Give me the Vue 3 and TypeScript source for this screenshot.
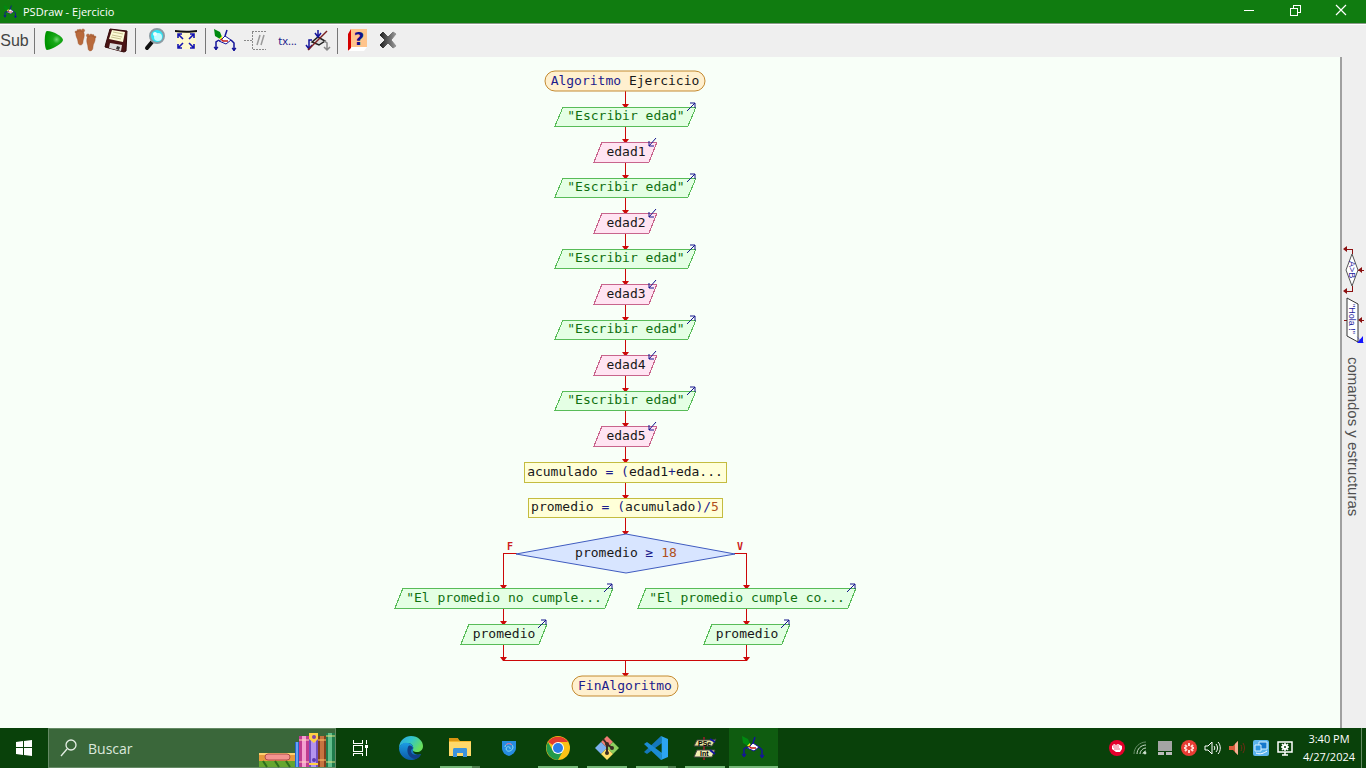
<script setup lang="ts">
type Kind = 'terminal' | 'output' | 'input' | 'assign' | 'decision'
type Tone = 'word' | 'key' | 'string' | 'number'

interface Piece {
  text: string
  tone: Tone
}

interface FlowNode {
  kind: Kind
  x: number
  y: number
  w: number
  h: number
  pieces: Piece[]
}

interface Arrow {
  x: number
  from: number
  to: number
}

const NODE_H = 20
const AXIS = 625
const LEFT_AXIS = 503
const RIGHT_AXIS = 746

const piece = (text: string, tone: Tone = 'word'): Piece => ({ text, tone })

const node = (kind: Kind, x: number, y: number, w: number, pieces: Piece[], h = NODE_H): FlowNode =>
  ({ kind, x, y, w, h, pieces })

const readingRows = [107, 178, 249, 320, 391]
const readings: FlowNode[] = readingRows.flatMap((y, i) => [
  node('output', 555, y, 141, [piece('"Escribir edad"', 'string')], 19),
  node('input', 594, y + 35, 63, [piece(`edad${i + 1}`)]),
])

const mainColumn: FlowNode[] = [
  node('terminal', 545, 71, 160, [piece('Algoritmo', 'key'), piece(' Ejercicio')]),
  ...readings,
  node('assign', 524, 462, 202, [piece('acumulado '), piece('= (', 'key'), piece('edad1'), piece('+', 'key'), piece('eda...')]),
  node('assign', 528, 498, 194, [
    piece('promedio '), piece('= (', 'key'), piece('acumulado'), piece(')/', 'key'), piece('5', 'number'),
  ], 19),
  node('decision', 516, 534, 219, [piece('promedio '), piece('≥ ', 'key'), piece('18', 'number')], 39),
]

const branches: FlowNode[] = [
  node('output', 395, 588, 218, [piece('"El promedio no cumple...', 'string')]),
  node('output', 461, 624, 86, [piece('promedio')]),
  node('output', 638, 588, 218, [piece('"El promedio cumple co...', 'string')]),
  node('output', 704, 624, 86, [piece('promedio')]),
]

const nodes: FlowNode[] = [
  ...mainColumn,
  ...branches,
  node('terminal', 572, 676, 106, [piece('FinAlgoritmo', 'key')]),
]

const arrows: Arrow[] = [
  ...mainColumn.slice(1).map((n, i) => ({ x: AXIS, from: mainColumn[i].y + NODE_H, to: n.y })),
  { x: LEFT_AXIS, from: 553, to: 588 },
  { x: LEFT_AXIS, from: 608, to: 624 },
  { x: LEFT_AXIS, from: 644, to: 660 },
  { x: RIGHT_AXIS, from: 553, to: 588 },
  { x: RIGHT_AXIS, from: 608, to: 624 },
  { x: RIGHT_AXIS, from: 644, to: 660 },
  { x: AXIS, from: 660, to: 676 },
]

function outline(n: FlowNode): string {
  const r = n.x + n.w
  const b = n.y + n.h
  if (n.kind === 'decision') {
    const cx = n.x + Math.round(n.w / 2)
    const cy = n.y + Math.round(n.h / 2)
    return `M${n.x} ${cy}L${cx} ${n.y}L${r} ${cy}L${cx} ${b}Z`
  }
  if (n.kind === 'output' || n.kind === 'input') {
    return `M${n.x + 8} ${n.y}H${r}L${r - 8} ${b}H${n.x}Z`
  }
  return `M${n.x} ${n.y}H${r}V${b}H${n.x}Z`
}

function mark(n: FlowNode): string {
  const r = n.x + n.w
  return n.kind === 'output'
    ? `M${r - 9} ${n.y + 4}L${r - 1} ${n.y - 4}M${r - 6} ${n.y - 4}H${r - 1}V${n.y + 1}`
    : `M${r - 1} ${n.y - 4}L${r - 8} ${n.y + 4}M${r - 8} ${n.y - 1}V${n.y + 4}H${r - 3}`
}

const baseline = (n: FlowNode): number => {
  if (n.kind === 'decision') return n.y + 23
  return n.h < NODE_H ? n.y + 13 : n.y + 14
}
const head = (a: Arrow): string => `M${a.x - 3} ${a.to - 3}H${a.x + 4}L${a.x + 1} ${a.to + 1}H${a.x}Z`
</script>

<template>
  <div class="window">
    <svg class="defs" aria-hidden="true">
      <symbol id="psdraw" viewBox="0 0 25 24">
        <path d="M1 0L7 3L9 8L7 10L2 7Z" fill="#008a10" />
        <path d="M6 10L9 7L10 11Z" fill="#ffff20" />
        <path d="M12 7L18 11L13 15L6 12L9 10Z" fill="#fff" stroke="#14149a" stroke-width="1" />
        <path d="M8 10L10 12H12L15 12" fill="none" stroke="#c01818" stroke-width="1.5" />
        <path d="M14 1L12 7M6 11L3 13V20M18 11L21 14V21" fill="none" stroke="#14149a" stroke-width="1.5" />
        <path d="M1 18L3 21L5 18L3 19ZM19 19L21 22L23 19L21 20Z" fill="#14149a" stroke="#14149a" />
      </symbol>
    </svg>

    <header class="titlebar">
      <svg class="title-icon" viewBox="0 0 25 24" aria-hidden="true"><use href="#psdraw" /></svg>
      <span class="title">PSDraw - Ejercicio</span>
      <div class="window-buttons">
        <button type="button" aria-label="Minimizar">
          <svg width="12" height="12"><path d="M1 6H11V7H1Z" fill="#fff" /></svg>
        </button>
        <button type="button" aria-label="Restaurar">
          <svg width="12" height="12" shape-rendering="crispEdges" fill="none" stroke="#fff">
            <path d="M1 4H8V11H1ZM4 4V1H11V8H8" />
          </svg>
        </button>
        <button type="button" aria-label="Cerrar">
          <svg width="12" height="12"><path d="M1 1L11 11M11 1L1 11" stroke="#fff" stroke-width="1.2" /></svg>
        </button>
      </div>
    </header>

    <nav class="toolbar" aria-label="Herramientas">
      <button type="button" class="sub">Sub</button>
      <i class="sep"></i>
      <button type="button" aria-label="Ejecutar">
        <svg width="25" height="24">
          <defs>
            <radialGradient id="play" cx=".65" cy=".45" r=".6">
              <stop offset="0" stop-color="#6fd86f" /><stop offset=".35" stop-color="#18a818" /><stop offset="1" stop-color="#009400" />
            </radialGradient>
          </defs>
          <path d="M5 2C12 2 21 8 21 11C21 14 11 20 5 21C2 21 2 2 5 2Z" fill="url(#play)" />
        </svg>
      </button>
      <button type="button" aria-label="Paso a paso">
        <svg width="25" height="24" fill="#b96a3c" stroke="#94502a" stroke-width=".4">
          <path d="M3 3C5 1 10 1 11 4C12 8 10 10 10 13C10 17 5 17 5 13C5 9 2 8 3 3Z" />
          <circle cx="3" cy="3" r="1" /><circle cx="5" cy="1.5" r="1" /><circle cx="7" cy="1.2" r="1" /><circle cx="10" cy="1.5" r="1.6" />
          <path d="M14 9C15 6 20 6 22 8C23 13 20 14 20 18C20 23 15 23 15 19C15 15 13 14 14 9Z" />
          <circle cx="22" cy="8" r="1" /><circle cx="20" cy="6.5" r="1" /><circle cx="18" cy="6" r="1" /><circle cx="15" cy="6.5" r="1.6" />
        </svg>
      </button>
      <button type="button" aria-label="Guardar">
        <svg width="25" height="24">
          <path d="M6 0L23 2L22 22L20 23L1 18L2 14Z" fill="#4a1414" stroke="#300808" />
          <path d="M8 1L21 3L19 13L5 10Z" fill="#fdfbd6" />
          <path d="M9 3L19 5M8 6L18 8M7 8L17 10" stroke="#c9c391" />
          <path d="M6 14L18 16L17 22L5 19Z" fill="#ddd" />
          <path d="M13 17L16 18L15 21L12 20Z" fill="#333" />
        </svg>
      </button>
      <i class="sep"></i>
      <button type="button" aria-label="Zoom">
        <svg width="25" height="24">
          <path d="M9 13L4 19" stroke="#111" stroke-width="4" stroke-linecap="round" />
          <circle cx="14" cy="7" r="7" fill="#30e4f4" stroke="#8c9ca4" stroke-width="2" />
          <circle cx="15" cy="8" r="4" fill="#c4fbff" />
          <circle cx="12" cy="5" r="2" fill="#effeff" />
        </svg>
      </button>
      <button type="button" aria-label="Ajustar">
        <svg width="25" height="24">
          <path d="M2 2H22V20H3Z" fill="#fdf9cf" />
          <path d="M1 1C8 2 17 2 23 1V3C17 4 8 4 1 3Z" fill="#111" />
          <path
            d="M9 10L4 5M4 9V5H8M15 10L20 5M16 5H20V9M9 14L4 19M4 15V19H8M15 14L20 19M16 19H20V15"
            fill="none" stroke="#1414b4" stroke-width="1.6"
          />
        </svg>
      </button>
      <i class="sep"></i>
      <button type="button" aria-label="Editar"><svg width="25" height="24"><use href="#psdraw" /></svg></button>
      <button type="button" aria-label="Comentarios">
        <svg width="25" height="24" fill="none" stroke="#888" shape-rendering="crispEdges">
          <path d="M0 11H8M22 2H8V20H22" stroke-dasharray="2 1" />
          <path d="M13 16L16 6M17 16L20 6" stroke="#999" stroke-width="1.5" shape-rendering="auto" />
        </svg>
      </button>
      <button type="button" class="tx">tx...</button>
      <button type="button" aria-label="Estilo">
        <svg width="25" height="24" fill="none">
          <path d="M12 8L19 12L13 16L6 13Z" fill="#ddd" stroke="#222" stroke-width="1.5" />
          <path d="M12 1V7M9 4L12 8L15 4M6 11H3V19M0 16L3 20L6 16" stroke="#14149a" stroke-width="1.5" />
          <path d="M18 12L21 14V20M18 18L21 21L24 18" stroke="#888" stroke-width="1.5" />
          <path d="M21 2L2 21" stroke="#7a2020" stroke-width="1.5" />
        </svg>
      </button>
      <i class="sep"></i>
      <button type="button" class="help" aria-label="Ayuda">
        <svg width="25" height="24">
          <path d="M6 0L3 5V22L6 20Z" fill="#d40000" />
          <path d="M6 0H22V18H6Z" fill="#ffc48c" />
          <path d="M3 22L7 18H22L19 22Z" fill="#fff" />
          <text x="14" y="16" text-anchor="middle">?</text>
        </svg>
      </button>
      <button type="button" aria-label="Salir">
        <svg width="25" height="24">
          <defs><linearGradient id="quit" x1="0" x2="1"><stop offset="0" stop-color="#222" /><stop offset="1" stop-color="#999" /></linearGradient></defs>
          <path d="M4 6L7 3L12 8L17 3L20 5L15 11L20 17L17 19L12 14L7 19L4 16L9 11Z" fill="url(#quit)" stroke="url(#quit)" stroke-linejoin="round" />
        </svg>
      </button>
    </nav>

    <main class="work">
      <section class="canvas" aria-label="Diagrama de flujo">
        <svg class="diagram" viewBox="0 57 900 660" width="900" height="660">
          <g class="wires">
            <path d="M503 553H517V554H503ZM734 553H747V554H734ZM503 660H747V661H503Z" />
            <template v-for="(a, i) in arrows" :key="i">
              <rect :x="a.x" :y="a.from" width="1" :height="a.to - a.from" />
              <path :d="head(a)" />
            </template>
          </g>
          <text class="branch" x="507" y="550">F</text>
          <text class="branch" x="737" y="550">V</text>
          <g v-for="(n, i) in nodes" :key="i" :class="['node', n.kind]">
            <rect v-if="n.kind === 'terminal'" class="shape" :x="n.x" :y="n.y" :width="n.w" :height="n.h" rx="10" />
            <path v-else class="shape" :d="outline(n)" />
            <path v-if="n.kind === 'output' || n.kind === 'input'" class="mark" :d="mark(n)" />
            <text :x="n.x + Math.ceil(n.w / 2)" :y="baseline(n)"><tspan
              v-for="(p, j) in n.pieces" :key="j" :class="p.tone">{{ p.text }}</tspan></text>
          </g>
        </svg>
      </section>

      <aside class="palette">
        <svg width="24" height="100">
          <g fill="none" stroke="#8c1010" shape-rendering="crispEdges">
            <path d="M10 7V2H4M10 39V44H4M16 23H22M2 73H5M17 73H22" />
          </g>
          <path d="M5 -1V5L1 2ZM5 41V47L1 44ZM20 20V26L16 23ZM20 70V76L16 73Z" fill="#8c1010" />
          <path d="M10 7L16 23L10 39L4 23Z" fill="#fff" stroke="#555" />
          <path d="M5 51L16 57V95L5 89Z" fill="#fff" stroke="#333" />
          <text transform="translate(7 14) rotate(90)">A&gt;B</text>
          <text transform="translate(7 57) rotate(90)">"Hola !"</text>
          <path d="M14 89L22 96H15L19 94ZM21 89V96H15Z" fill="#1414ff" />
        </svg>
        <span class="palette-label">comandos y estructuras</span>
      </aside>
    </main>

    <footer class="taskbar">
      <button type="button" class="start" aria-label="Inicio">
        <svg width="16" height="16" fill="#fff"><path d="M0 2L7 1V7H0ZM8 1L16 0V7H8ZM0 8H7V15L0 14ZM8 8H16V16L8 15Z" /></svg>
      </button>
      <label class="search">
        <svg width="18" height="18" fill="none" stroke="#e4eee4" stroke-width="1.3">
          <circle cx="11" cy="6" r="5" /><path d="M7 10L1 17" />
        </svg>
        <input type="search" placeholder="Buscar" aria-label="Buscar" />
        <svg class="books" width="78" height="36">
          <path d="M2 22H38V30H2Z" fill="#e79a3c" /><path d="M2 22H38V24H2Z" fill="#ffd070" />
          <rect x="8" y="23" width="25" height="6" rx="3" fill="#f49490" stroke="#b04c4c" />
          <path d="M2 30H38V36H2Z" fill="#65a62e" /><path d="M6 30L10 36M18 30L22 36M29 30L33 36" stroke="#2c6e1c" stroke-width="2" />
          <path d="M38 11H42V36H38Z" fill="#2464cc" /><path d="M39 11H41V36H39Z" fill="#66a4f4" />
          <path d="M42 5H52V36H42Z" fill="#c03c90" /><path d="M45 5H49V36H45Z" fill="#f4a0d0" /><path d="M42 9H52M42 31H52" stroke="#ffd8bc" />
          <path d="M52 2H61V36H52Z" fill="#7350c0" /><path d="M54 2H59V36H54Z" fill="#b494ee" /><path d="M52 2H61V8L57 12L52 8ZM52 32H61V34H52Z" fill="#ffcf44" />
          <circle cx="57" cy="6" r="2" fill="#8444a8" /><circle cx="57" cy="29" r="2" fill="#5c3ab0" />
          <path d="M61 5H69V36H61Z" fill="#84401e" /><path d="M63 5H67V36H63Z" fill="#c67440" /><path d="M61 9H69M61 29H69" stroke="#ffc468" />
          <path d="M69 2H78V36H69Z" fill="#1f7c4c" /><path d="M71 2H75V36H71Z" fill="#62bd8c" /><path d="M69 5H78M69 31H78" stroke="#e4e07c" />
        </svg>
      </label>

      <nav class="apps" aria-label="Aplicaciones">
        <button type="button" class="tasks" aria-label="Vista de tareas">
          <svg width="18" height="16" fill="none" stroke="#fff" shape-rendering="crispEdges">
            <path d="M2 0V3H11V0M2 5H11V11H2ZM2 16V13H11V16M15 0V4M15 8V16" /><path d="M14 5H16V7H14Z" fill="#fff" />
          </svg>
        </button>
        <button type="button" aria-label="Edge">
          <svg width="24" height="24">
            <defs>
              <linearGradient id="edge-a" x1="0" y1="0" x2="1" y2=".5"><stop offset="0" stop-color="#2ca4e4" /><stop offset=".5" stop-color="#31c5cc" /><stop offset="1" stop-color="#68e05c" /></linearGradient>
              <linearGradient id="edge-b" x1="0" y1="0" x2="0" y2="1"><stop offset="0" stop-color="#1c9ce4" /><stop offset="1" stop-color="#0c59a4" /></linearGradient>
            </defs>
            <path d="M0 11C1 4 6 0 12 0C19 0 24 5 24 10C24 14 21 16 18 16C15 16 13 15 14 13C15 11 13 7 9 7C4 7 1 9 0 12Z" fill="url(#edge-a)" />
            <path d="M0 12C1 8 5 6 9 7C13 7 15 11 14 13C13 17 17 20 22 18C20 22 16 24 12 24C5 24 0 18 0 12Z" fill="url(#edge-b)" />
            <path d="M9 11C7 16 10 23 17 23C20 22 21 20 22 18C17 20 12 19 12 15C12 13 14 13 14 12C12 9 10 9 9 11Z" fill="#123f86" />
          </svg>
        </button>
        <button type="button" class="open stacked" aria-label="Explorador">
          <svg width="22" height="20">
            <path d="M0 1H9L11 3H22V18H0Z" fill="#f6b92c" /><path d="M0 4H22V18H0Z" fill="#ffd96a" /><path d="M0 0H9L10 3H0Z" fill="#d99412" />
            <path d="M4 19V12C4 10 5 10 6 10H17C18 10 18 11 18 12V19H14V15H8V19Z" fill="#3c94dc" />
          </svg>
        </button>
        <button type="button" aria-label="Escudo">
          <svg width="16" height="16">
            <path d="M1 1H15V8C15 12 11 15 8 16C4 15 1 12 1 8Z" fill="#268ce0" />
            <path d="M4 7C4 3 11 2 12 7C12 11 6 13 5 9C5 6 10 6 9 9" fill="none" stroke="#8ddff0" /><path d="M5 5C7 3 9 3 11 5" fill="none" stroke="#e45c8c" />
          </svg>
        </button>
        <button type="button" class="open" aria-label="Chrome">
          <svg width="24" height="24">
            <circle cx="12" cy="12" r="12" fill="#fbc116" />
            <path d="M12 12L2 6A12 12 0 0 1 22 6H12Z" fill="#e33b2e" /><path d="M2 6A12 12 0 0 0 12 24L17 15L7 15Z" fill="#229a4c" />
            <circle cx="12" cy="12" r="6" fill="#fff" /><circle cx="12" cy="12" r="5" fill="#2b7de9" />
          </svg>
        </button>
        <button type="button" class="open" aria-label="Git">
          <svg width="24" height="24">
            <path d="M12 0L18 6L12 12L6 6Z" fill="#f07c74" /><path d="M6 6L12 12L6 18L0 12Z" fill="#7cb0ee" />
            <path d="M18 6L24 12L18 18L12 12Z" fill="#8fd060" /><path d="M12 12L18 18L12 24L6 18Z" fill="#ffe068" />
            <path d="M8 3L12 8V18M12 8L17 12" stroke="#3a2c22" stroke-width="2" fill="none" />
            <circle cx="12" cy="8" r="2" fill="#3a2c22" /><circle cx="12" cy="17" r="2" fill="#3a2c22" /><circle cx="17" cy="12" r="2" fill="#3a2c22" />
          </svg>
        </button>
        <button type="button" class="open stacked" aria-label="Visual Studio Code">
          <svg width="24" height="24">
            <path d="M18 7L3 18L0 16L17 0Z" fill="#1478bc" /><path d="M18 17L3 6L0 8L17 24Z" fill="#1c8cd4" />
            <path d="M17 0L24 3V21L17 24C18 22 18 2 17 0Z" fill="#2ca4f0" />
          </svg>
        </button>
        <button type="button" class="open pseint" aria-label="PSeInt">
          <svg width="24" height="24">
            <path d="M11 1V24" stroke="#7c2424" stroke-width="2" />
            <path d="M4 4H20L23 3L19 10H1Z" fill="#e4e29c" stroke="#444" /><path d="M4 14H22L19 21H1Z" fill="#f1efb4" stroke="#444" />
            <path d="M17 3L22 6M17 14L22 18" stroke="#1414a0" stroke-width="2" />
            <text x="5" y="10">PSe</text><text x="7" y="20">Int</text>
          </svg>
        </button>
        <button type="button" class="open active" aria-label="PSDraw"><svg width="25" height="24"><use href="#psdraw" /></svg></button>
      </nav>

      <div class="tray">
        <button type="button" aria-label="Puño">
          <svg width="16" height="16"><circle cx="8" cy="8" r="8" fill="#e4002c" /><path d="M3 6L5 4L7 5L9 4L11 5L13 6V9L11 12H7L3 9Z" fill="#fff" /><path d="M5 5V8M7 5V8M9 5V8M5 9H11" stroke="#e4002c" stroke-width=".6" /></svg>
        </button>
        <button type="button" aria-label="Red">
          <svg width="16" height="16" fill="none" stroke="#cfe0cf"><path d="M1 14C1 7 7 2 13 2" stroke="#668c66" /><path d="M4 14C4 9 8 5 13 5M7 14C7 11 10 8 13 8M10 14C10 13 11 11 13 11" /><circle cx="12" cy="13" r="1" fill="#fff" /></svg>
        </button>
        <button type="button" aria-label="Pantalla">
          <svg width="16" height="16"><path d="M1 1H15V11H1Z" fill="#a4a4a4" /><path d="M1 12H7V15H1ZM9 12H15V15H9Z" fill="#bcbcbc" /></svg>
        </button>
        <button type="button" aria-label="Notificador">
          <svg width="16" height="16"><circle cx="8" cy="8" r="8" fill="#e83c34" /><path d="M8 3V6M8 10V13M4 5L6 7M10 9L12 11M12 5L10 7M6 9L4 11M3 8H5M11 8H13" stroke="#ffdcd4" stroke-width="2" /></svg>
        </button>
        <button type="button" aria-label="Volumen">
          <svg width="18" height="16" fill="none" stroke="#fff"><path d="M1 6H4L8 2V14L4 10H1ZM10 6C11 7 11 9 10 10M12 4C14 6 14 10 12 12M14 2C17 5 17 11 14 14" /></svg>
        </button>
        <button type="button" aria-label="Audio">
          <svg width="16" height="16"><path d="M0 6H4L9 1V15L4 10H0Z" fill="#d85c3c" /><path d="M6 4L9 1V15L6 12Z" fill="#f4b094" /><path d="M12 5C13 7 13 9 12 11M14 3C16 6 16 10 14 13" fill="none" stroke="#6c2c14" /></svg>
        </button>
        <button type="button" aria-label="Gráficos">
          <svg width="16" height="16"><rect width="16" height="16" rx="2" fill="#5cb4ec" /><path d="M6 2H14V9H6Z" fill="#1478cc" stroke="#d4f0ff" /><path d="M2 5H8V11H2Z" fill="#2c94e0" stroke="#d4f0ff" /><path d="M3 13C7 15 11 13 14 11" stroke="#fff" fill="none" /></svg>
        </button>
        <button type="button" aria-label="Ajustes">
          <svg width="16" height="16" fill="none" stroke="#fff"><path d="M1 2H15V12H1ZM5 15H11M8 12V15" stroke-width="1.5" /><circle cx="8" cy="7" r="2" stroke-width="2" /><path d="M8 3V5M8 9V11M4 7H6M10 7H12M5 4L6 5M11 4L10 5M5 10L6 9M11 10L10 9" stroke-width="1.5" /></svg>
        </button>
      </div>
      <button type="button" class="clock"><span>3:40 PM</span><span>4/27/2024</span></button>
      <button type="button" class="desktop" aria-label="Mostrar escritorio"></button>
    </footer>
  </div>
</template>

<style>
body {
  margin: 0;
}
</style>

<style scoped>
.window {
  display: flex;
  flex-direction: column;
  height: 100vh;
  overflow: hidden;
  font-family: "Open Sans", "Noto Sans", sans-serif;
  background: #f8fff8;
}

.defs {
  position: absolute;
  width: 0;
  height: 0;
}

button {
  display: flex;
  align-items: center;
  justify-content: center;
  padding: 0;
  border: 0;
  background: none;
  font: inherit;
}

svg {
  flex: none;
  overflow: visible;
}

.titlebar {
  display: flex;
  align-items: center;
  box-sizing: border-box;
  height: 24px;
  padding-left: 3px;
  background: #107c10;
  border-bottom: 1px solid #8a9a8a;
  color: #fff;
}

.title-icon {
  width: 15px;
  height: 14px;
}

.title {
  margin-left: 5px;
  font-size: 11px;
  line-height: 20px;
}

.window-buttons {
  display: flex;
  margin-left: auto;
  padding-right: 2px;
  padding-bottom: 3px;
}

.window-buttons button {
  width: 46px;
  height: 20px;
}

.toolbar {
  display: flex;
  align-items: center;
  box-sizing: border-box;
  height: 33px;
  background: #efefef;
  border-top: 1px solid #fff;
}

.toolbar button {
  width: 31px;
  height: 32px;
}

.sep {
  display: flex;
  justify-content: center;
  width: 8px;
}

.sep::before {
  content: "";
  width: 1px;
  height: 26px;
  margin-right: 2px;
  background: #777;
}

.toolbar .sub {
  padding-right: 2px;
  font-family: "Liberation Sans Narrow", "Liberation Sans", sans-serif;
  font-size: 16px;
  color: #444;
}

.toolbar .tx {
  padding-bottom: 2px;
  font-family: "Noto Sans", sans-serif;
  font-size: 11px;
  color: #1c1c8c;
}

.help text {
  font: bold 18px "DejaVu Sans", sans-serif;
  fill: #10108c;
}

.work {
  display: flex;
  flex: 1;
  min-height: 0;
}

.canvas {
  flex: 1;
  min-width: 0;
  overflow: hidden;
}

.diagram {
  display: block;
}

.wires {
  fill: #cc0808;
}

.branch {
  font: bold 10px "DejaVu Sans Mono", monospace;
  fill: #cc2020;
}

.node text {
  font: 13px "DejaVu Sans Mono", monospace;
  text-anchor: middle;
  white-space: pre;
}

.shape {
  shape-rendering: crispEdges;
}

.terminal .shape {
  fill: #fff0cf;
  stroke: #c48a30;
  shape-rendering: auto;
}

.output .shape {
  fill: #e4ffe4;
  stroke: #58bc58;
}

.input .shape {
  fill: #ffe4f2;
  stroke: #c8648c;
}

.assign .shape {
  fill: #ffffd8;
  stroke: #c4bc40;
}

.decision .shape {
  fill: #d8e5ff;
  stroke: #405cc0;
  shape-rendering: auto;
}

.mark {
  fill: none;
  stroke: #14148c;
  stroke-width: 1px;
}

.word {
  fill: #181818;
}

.key {
  fill: #1c1c8c;
}

.string {
  fill: #107010;
}

.number {
  fill: #b05020;
}

.palette {
  display: flex;
  flex-direction: column;
  align-items: center;
  gap: 10px;
  box-sizing: border-box;
  width: 26px;
  padding-top: 190px;
  border-left: 2px solid #a0a0a0;
  background: #efefef;
}

.palette text {
  font: 9px "Liberation Sans", sans-serif;
  fill: #1c1c9c;
}

.palette-label {
  writing-mode: vertical-rl;
  padding-right: 2px;
  font: 15px/20px "Liberation Sans", sans-serif;
  color: #505050;
}

.taskbar {
  display: flex;
  height: 40px;
  background: #09410a;
  color: #fff;
}

.start {
  width: 48px;
}

.search {
  display: flex;
  align-items: center;
  box-sizing: border-box;
  width: 288px;
  padding-left: 11px;
  border: 1px solid #648a64;
  background: #3a673a;
}

.search input {
  flex: 1;
  min-width: 0;
  padding: 0 0 0 10px;
  border: 0;
  outline: 0;
  background: none;
  font: 14px "Open Sans", sans-serif;
  color: #e4eee4;
}

.search input::placeholder {
  color: #dce8dc;
  opacity: 1;
}

.books {
  align-self: flex-end;
}

.apps {
  display: flex;
}

.apps button {
  position: relative;
  width: 49px;
}

.apps .tasks {
  box-sizing: border-box;
  width: 50px;
  padding-right: 2px;
}

.apps .active {
  background: #0f5c10;
}

.open::after {
  content: "";
  position: absolute;
  bottom: 0;
  left: 5px;
  right: 4px;
  height: 2px;
  background: #76b878;
}

.stacked::after {
  border-right: 8px solid #4c7c4c;
  box-sizing: border-box;
}

.apps .active::after {
  left: 0;
  right: 0;
}

.pseint text {
  font: bold 7px "Liberation Sans", sans-serif;
}

.tray {
  display: flex;
  margin-left: auto;
}

.tray button {
  width: 24px;
}

.clock {
  flex-direction: column;
  width: 64px;
  font-size: 11px;
  line-height: 18px;
  color: #fff;
}

.desktop {
  width: 5px;
  border-left: 1px solid #648a64;
}
</style>
